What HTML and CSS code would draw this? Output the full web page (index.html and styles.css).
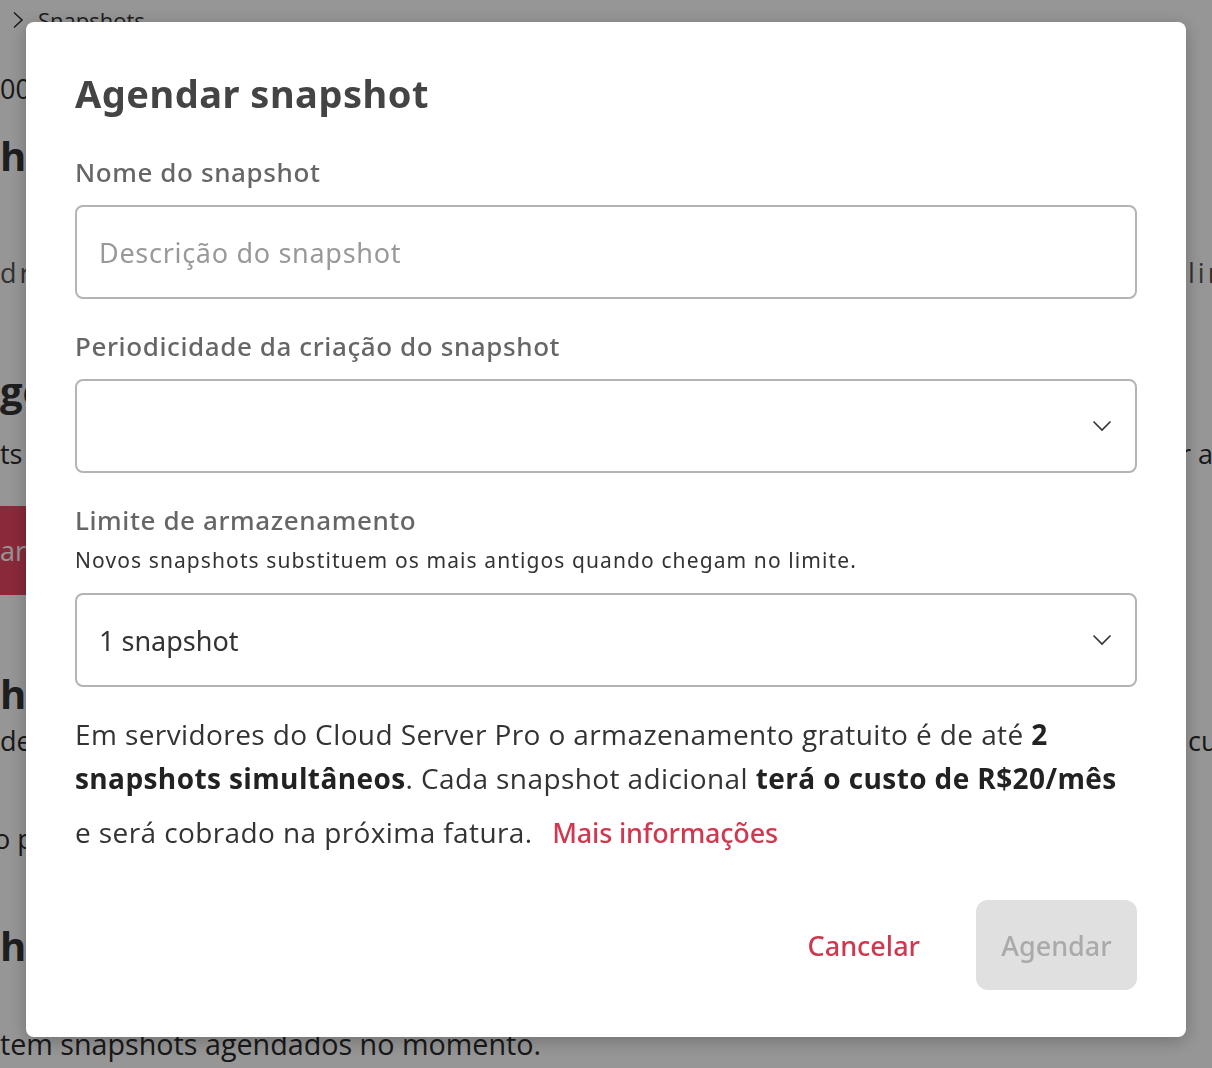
FILE: index.html
```html
<!DOCTYPE html>
<html lang="pt-BR">
<head>
<meta charset="utf-8">
<title>Agendar snapshot</title>
<link rel="stylesheet" href="styles.css">
</head>
<body>
<div class="page">
  <div class="row r-crumb">
    <svg class="crumb-arrow" width="12" height="18" viewBox="0 0 12 18"><path d="M2 1.5 L10 9 L2 16.5" fill="none" stroke="#333" stroke-width="1.6"/></svg>
    <span>Snapshots</span>
  </div>
  <div class="row r-num"><span class="pre">1</span><span>00 GB</span></div>
  <div class="row r-h1 bold"><span class="pre">Snaps</span><span>hots</span></div>
  <div class="row r-desc spaced"><span class="pre">Pa</span><span>drão de nomes</span><span class="post">limite</span></div>
  <div class="row r-h2 bold"><span class="pre">A</span><span>gendamentos</span></div>
  <div class="row r-txt"><span class="pre">Snapsho</span><span>ts agendados</span><span class="post post-wide">r agora</span></div>
  <div class="row r-btn"><span class="bg-btn"><span class="pre">Agend</span><span>ar</span></span></div>
  <div class="row r-h3 bold"><span class="pre">Snaps</span><span>hots</span></div>
  <div class="row r-txt2"><span>de backup</span><span class="post">cumpridos</span></div>
  <div class="row r-txt3"><span class="shift">o período</span></div>
  <div class="row r-h4 bold"><span class="pre">Snaps</span><span>hots</span></div>
  <div class="row r-last"><span class="pre">Não exis</span><span>tem snapshots agendados no momento.</span></div>
</div>
<div class="overlay"></div>
<div class="modal" role="dialog">
  <h1 class="title">Agendar snapshot</h1>
  <label class="label l-first">Nome do snapshot</label>
  <div class="field"><span class="placeholder">Descrição do snapshot</span></div>
  <label class="label">Periodicidade da criação do snapshot</label>
  <div class="field select">
    <span></span>
    <svg class="chev" width="20" height="12" viewBox="0 0 20 12"><path d="M1.5 1.5 L10 10 L18.5 1.5" fill="none" stroke="#333" stroke-width="1.6"/></svg>
  </div>
  <label class="label">Limite de armazenamento</label>
  <p class="helper">Novos snapshots substituem os mais antigos quando chegam no limite.</p>
  <div class="field select s-last">
    <span class="value">1 snapshot</span>
    <svg class="chev" width="20" height="12" viewBox="0 0 20 12"><path d="M1.5 1.5 L10 10 L18.5 1.5" fill="none" stroke="#333" stroke-width="1.6"/></svg>
  </div>
  <p class="info">Em servidores do Cloud Server Pro o armazenamento gratuito é de até <b>2 snapshots simultâneos</b>. Cada snapshot adicional <b>terá o custo de R$20/mês</b> e será cobrado na próxima fatura. <a class="more" href="#">Mais informações</a></p>
  <div class="actions">
    <button class="btn-cancel">Cancelar</button>
    <button class="btn-primary" disabled>Agendar</button>
  </div>
</div>
</body>
</html>
```
FILE: styles.css
```css
* { box-sizing: border-box; }
html, body { margin: 0; padding: 0; }
body {
  width: 1212px;
  height: 1068px;
  overflow: hidden;
  background: #fff;
  font-family: "Open Sans", "Noto Sans", sans-serif;
  color: #222;
}

/* background page (under the overlay) */
.page {
  height: 1068px;
  overflow: hidden;
  display: flex;
  flex-direction: column;
}
.row {
  flex-shrink: 0;
  display: flex;
  align-items: center;
  font-size: 27px;
  white-space: nowrap;
  color: #2a2a2a;
}
.pre {
  display: flex;
  justify-content: flex-end;
  width: 0;
  white-space: nowrap;
}
.post {
  margin-left: auto;
  width: 24px;
  white-space: nowrap;
}
.post-wide { width: 32px; }
.bold { font-weight: 700; font-size: 40px; color: #333; }
.spaced { letter-spacing: 3px; color: #555; }

.r-crumb { height: 40px; padding-left: 12px; font-size: 22px; color: #333; }
.crumb-arrow { display: block; margin-right: 14px; }
.r-num { height: 96px; }
.r-h1 { height: 38px; }
.r-desc { height: 196px; }
.r-h2 { height: 40px; }
.r-txt { height: 86px; }
.r-btn { height: 178px; align-items: flex-start; padding-top: 10px; }
.bg-btn {
  display: flex;
  align-items: center;
  height: 89px;
  margin-left: -100px;
  padding: 0 26px 0 100px;
  background: #ea4764;
  color: #fff;
  font-size: 27px;
}
.r-h3 { height: 38px; }
.r-txt2 { height: 56px; }
.r-txt3 { height: 140px; }
.shift { margin-left: -6px; }
.r-h4 { height: 74px; }
.r-last { height: 122px; font-size: 28.7px; }

.overlay {
  position: fixed;
  inset: 0;
  background: rgba(0, 0, 0, 0.41);
}

/* modal */
.modal {
  position: fixed;
  left: 26px;
  top: 22px;
  width: 1160px;
  height: 1015px;
  background: #fff;
  border-radius: 8px;
  box-shadow: 0 4px 18px rgba(0, 0, 0, 0.25);
  padding: 47px 49px 47px 49px;
  display: flex;
  flex-direction: column;
  font-family: "Noto Sans", "Open Sans", sans-serif;
}
.title {
  margin: 0;
  font-size: 38px;
  line-height: 48px;
  font-weight: 700;
  color: #444;
  letter-spacing: 0.5px;
}
.label {
  display: block;
  font-size: 26px;
  line-height: 32px;
  font-weight: 500;
  color: #666;
  margin-top: 31px;
  letter-spacing: 0.6px;
}
.l-first { margin-top: 39px; }
.field {
  margin-top: 17px;
  height: 94px;
  border: 2px solid #b4b4b4;
  border-radius: 8px;
  display: flex;
  align-items: center;
  justify-content: space-between;
  padding: 0 23px 0 22px;
  font-size: 27px;
}
.placeholder { color: #999; letter-spacing: 0.7px; }
.value { color: #333; }
.chev { display: block; }
.helper {
  margin: 10px 0 0;
  font-size: 21px;
  line-height: 28px;
  color: #333;
  letter-spacing: 1.1px;
}
.s-last { margin-top: 19px; }
.info {
  margin: 25px 0 0;
  font-family: "Open Sans", "Noto Sans", sans-serif;
  font-size: 28px;
  line-height: 44px;
  letter-spacing: 0.4px;
  color: #333;
}
.info b { font-weight: 700; color: #222; }
.more {
  display: inline-block;
  line-height: 66px;
  margin-left: 12px;
  color: #d0384f;
  text-decoration: none;
  font-family: "Noto Sans", sans-serif;
  font-weight: 500;
  font-size: 27px;
  letter-spacing: -0.2px;
}
.actions {
  margin-top: auto;
  display: flex;
  justify-content: flex-end;
  align-items: center;
  gap: 30px;
}
button {
  font-family: "Noto Sans", sans-serif;
  border: 0;
  background: none;
  cursor: pointer;
}
.btn-cancel {
  color: #d0384f;
  font-size: 27px;
  font-weight: 500;
  padding: 0 26px;
  height: 90px;
}
.btn-primary {
  height: 90px;
  width: 161px;
  border-radius: 12px;
  background: #e0e0e0;
  color: #aaa;
  font-size: 27px;
  font-weight: 500;
}
```
